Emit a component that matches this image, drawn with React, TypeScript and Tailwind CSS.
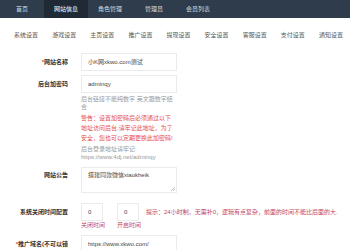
const navItems = ['首页', '网站信息', '角色管理', '管理员', '会员列表']
const tabs = ['系统设置', '游戏设置', '主页设置', '推广设置', '提现设置', '安全设置', '客服设置', '支付设置', '通知设置']

const font = { fontFamily: '"Liberation Sans", "Noto Sans CJK SC", sans-serif' }

function Label({ children, required }: { children: React.ReactNode; required?: boolean }) {
  return (
    <div className="w-[68px] shrink-0 overflow-hidden whitespace-nowrap text-right text-[6px] font-semibold text-[#333]">
      {required && <span className="text-[#e4393c]">*</span>}
      {children}
    </div>
  )
}

function Field({ value, className = '' }: { value: string; className?: string }) {
  return (
    <div className={`flex h-[18px] items-center border border-[#ebebeb] bg-white px-[6px] text-[6px] text-[#444] ${className}`}>
      {value}
    </div>
  )
}

export default function App() {
  return (
    <div className="h-[250px] w-[350px] overflow-hidden bg-white" style={font}>
      <div className="flex h-[18px] bg-[#2e3c4c] text-[6px] text-[#d5d9de]">
        {navItems.map((n, i) => (
          <div
            key={n}
            className={`flex w-[44px] items-center justify-center ${i === 1 ? 'bg-[#1f2a36] text-white' : ''}`}
          >
            {n}
          </div>
        ))}
      </div>

      <div className="flex h-[35px] items-center pl-[7px] text-[6px] text-[#555]">
        {tabs.map((t) => (
          <div key={t} className="w-[39px] text-center">
            {t}
          </div>
        ))}
      </div>

      <div className="flex flex-col">
        <div className="flex h-[18px] items-center gap-[13px]">
          <Label required>网站名称</Label>
          <Field value="小K网xkwo.com测试" className="w-[96px]" />
        </div>

        <div className="mt-[4px] flex h-[18px] items-center gap-[13px]">
          <Label>后台加密码</Label>
          <Field value="adminqy" className="w-[96px]" />
        </div>

        <div className="ml-[81px] w-[94px]">
          <p className="mt-[2px] text-[6px] leading-[8px] text-[#999]">后台链接不能纯数字 英文跟数字结合</p>
          <p className="mt-[2px] text-[6px] leading-[10px] text-[#e84c3d]">
            警告：设置加密码后必须通过以下地址访问后台,请牢记此地址，为了安全，您也可以定期更换此加密码!
          </p>
          <p className="mt-[2px] text-[6px] leading-[8px] text-[#999]">
            后台登录地址请牢记: https://www.4dj.net/adminqy
          </p>
        </div>

        <div className="mt-[6px] flex gap-[13px]">
          <div className="pt-[4px]">
            <Label>网站公告</Label>
          </div>
          <div className="relative h-[26px] w-[96px] border border-[#ebebeb] px-[6px] pt-[3px] text-[6px] text-[#444]">
            搭建同款微信xiaokheik
            <svg className="absolute bottom-[1px] right-[1px]" width="4" height="4" viewBox="0 0 4 4">
              <path d="M4 0 L0 4 M4 2 L2 4" stroke="#999" strokeWidth="0.6" />
            </svg>
          </div>
        </div>

        <div className="mt-[10px] flex h-[18px] items-center gap-[13px]">
          <Label>系统关闭时间配置</Label>
          <div className="flex items-center gap-[14px]">
            <Field value="0" className="w-[22px]" />
            <Field value="0" className="w-[22px]" />
          </div>
          <div className="-ml-[6px] whitespace-nowrap text-[6px] text-[#c0466b]">
            提示：24小时制，无需补0，逻辑有点复杂，前面的时间不能比后面的大.
          </div>
        </div>
        <div className="ml-[81px] flex gap-[12px] text-[6px] leading-[8px] text-[#c0466b]">
          <span className="w-[24px]">关闭时间</span>
          <span>开启时间</span>
        </div>

        <div className="mt-[6px] flex h-[18px] items-center gap-[13px]">
          <Label required>推广域名(不可以错</Label>
          <Field value="https://www.xkwo.com/" className="w-[96px]" />
        </div>
      </div>
    </div>
  )
}
